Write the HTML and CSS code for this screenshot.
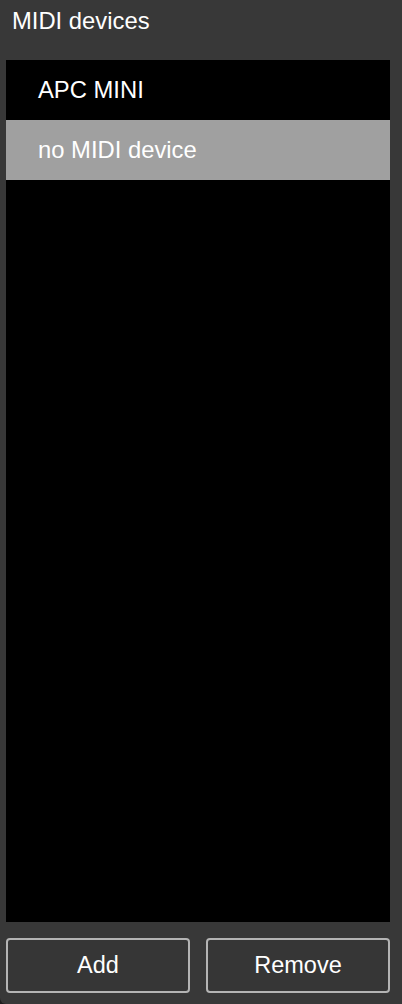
FILE: index.html
```html
<!DOCTYPE html>
<html lang="en">
<head>
<meta charset="utf-8">
<title>MIDI devices</title>
<link rel="stylesheet" href="styles.css">
</head>
<body>
<div class="panel">
  <div class="title">MIDI devices</div>
  <ul class="device-list">
    <li class="device">APC MINI</li>
    <li class="device selected">no MIDI device</li>
  </ul>
  <div class="actions">
    <button class="btn" type="button">Add</button>
    <button class="btn" type="button">Remove</button>
  </div>
</div>
</body>
</html>
```

FILE: styles.css
```css
html {
  background: #1e1e1e;
}
body {
  margin: 0;
  font-family: "Liberation Sans", Arial, sans-serif;
  color: #ffffff;
}
.panel {
  box-sizing: border-box;
  height: 1004px;
  width: 402px;
  background: #383838;
  border-bottom-left-radius: 6px;
  display: flex;
  flex-direction: column;
  padding: 0 12px 11px 6px;
}
.title {
  height: 60px;
  box-sizing: border-box;
  padding: 9px 0 0 6px;
  font-size: 23.8px;
  line-height: 23.8px;
}
.device-list {
  flex: 1;
  margin: 0;
  padding: 0;
  list-style: none;
  background: #000000;
}
.device {
  height: 60px;
  display: flex;
  align-items: center;
  padding-left: 32px;
  font-size: 23.8px;
}
.device.selected {
  background: #a0a0a0;
}
.actions {
  display: grid;
  grid-template-columns: 1fr 1fr;
  column-gap: 16px;
  margin-top: 16px;
}
.btn {
  height: 55px;
  background: #363636;
  border: 2px solid #b4b4b4;
  border-radius: 4px;
  color: #ffffff;
  font-family: "Liberation Sans", Arial, sans-serif;
  font-size: 23.5px;
  padding: 0;
}
```
